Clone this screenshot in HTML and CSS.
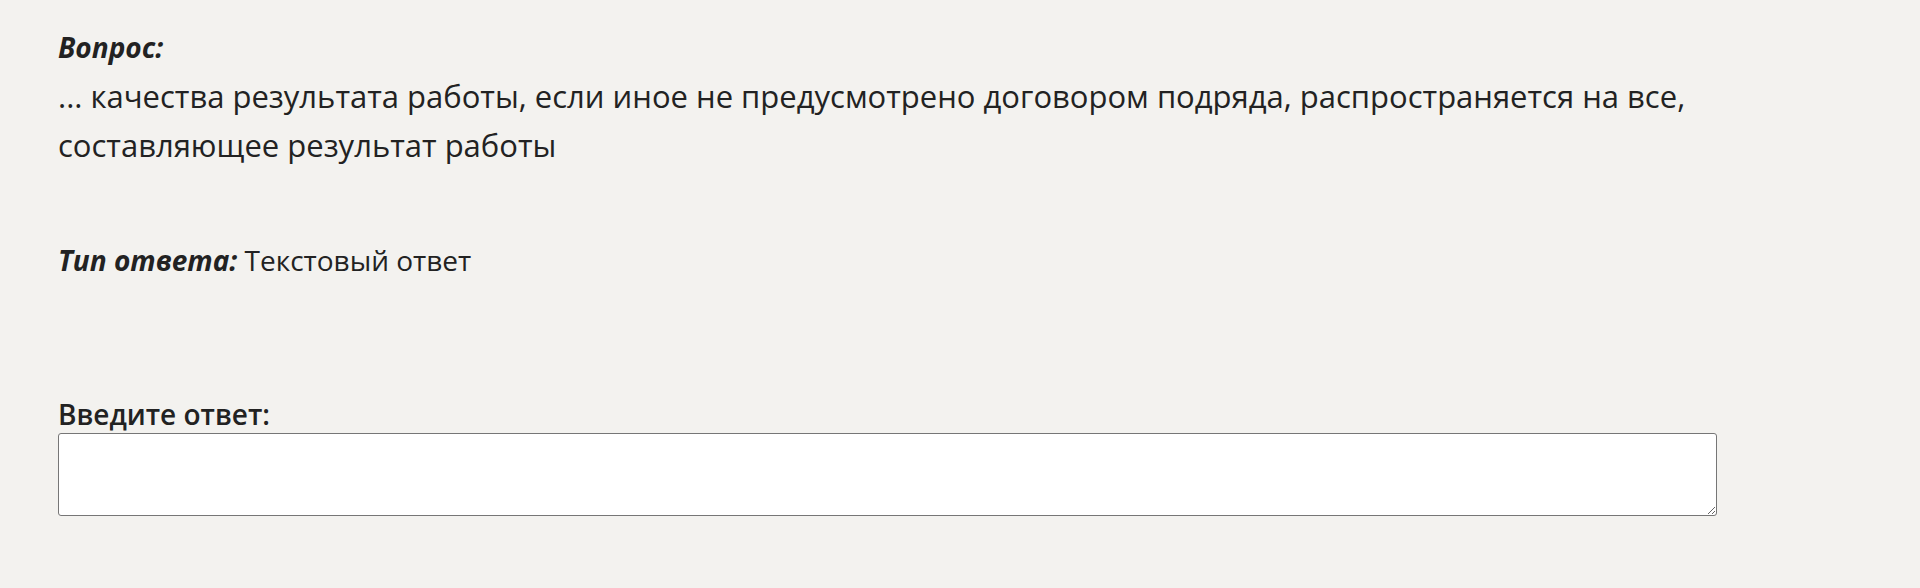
FILE: index.html
```html
<!DOCTYPE html>
<html lang="ru">
<head>
    <meta charset="UTF-8">
    <meta name="viewport" content="width=device-width, initial-scale=1.0">
    <title>Вопрос</title>
    <link rel="stylesheet" href="styles.css">
</head>
<body>
    <div class="question">
        <!-- Текст вопроса -->
        <div class="question-label">Вопрос:</div>
        <div class="question-text">
            ... качества результата работы, если иное не предусмотрено договором подряда, распространяется на все, составляющее результат работы
        </div>

        <!-- Тип ответа -->
        <div class="answer-type">
            <span class="answer-type-label">Тип ответа:</span> Текстовый ответ
        </div>

        <!-- Поле ввода -->
        <div class="answer-input">
            <label class="answer-label" for="answer">Введите ответ:</label>
            <textarea id="answer" class="answer-field"></textarea>
        </div>
    </div>
</body>
</html>
```

FILE: styles.css
```css
body {
    margin: 0;
    padding: 23px 58px 0;
    background-color: #f3f2ef;
    color: #222;
    font-family: "Open Sans", "Noto Sans", sans-serif;
    font-size: 28px;
    line-height: 49px;
}

.question {
    width: 1659px;
}

.question-label {
    font-weight: 700;
    font-style: italic;
}

.question-text {
    font-size: 31px;
}

.answer-type {
    margin-top: 66px;
}

.answer-type-label {
    font-weight: 700;
    font-style: italic;
}

.answer-input {
    margin-top: 111px;
}

.answer-label {
    display: block;
    font-weight: 600;
    line-height: 36px;
}

.answer-field {
    display: block;
    box-sizing: border-box;
    width: 100%;
    height: 83px;
    margin: 1px 0 0;
    border: 1px solid #767676;
    border-radius: 3px;
    background: #fff;
    font-family: inherit;
    font-size: 16px;
}
```
